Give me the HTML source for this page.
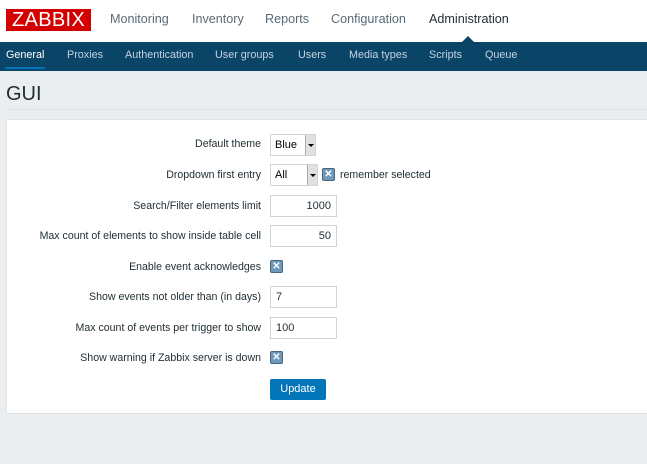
<!DOCTYPE html>
<html><head><style>
*{box-sizing:border-box;margin:0;padding:0}
body{width:647px;height:464px;background:#ebeef0;font-family:"Liberation Sans",sans-serif;position:relative;overflow:hidden}
.hdr{position:absolute;left:0;top:0;width:647px;height:42px;background:#fff}
.logo{position:absolute;left:6px;top:9px;width:85px;height:22px;background:#d40000;color:#fff;font-size:20px;letter-spacing:0.3px;line-height:22px;text-align:center}
.top{position:absolute;top:12px;font-size:12.6px;color:#5a6a76}
.nav{position:absolute;left:0;top:42px;width:647px;height:29px;background:#0a4466}
.sub{position:absolute;top:49px;font-size:10.8px;color:#c4d3df}
.arrow{position:absolute;left:462px;top:36px;width:0;height:0;border-left:6px solid transparent;border-right:6px solid transparent;border-bottom:6px solid #0a4466}
.title{position:absolute;left:6px;top:83px;font-size:20px;color:#1f2c33}
.rule{position:absolute;left:6px;top:109px;width:641px;height:1px;background:#dde1e4}
.box{position:absolute;left:6px;top:119px;width:645px;height:295px;background:#fff;border:1px solid #dfe4e7}
.lbl{position:absolute;right:386px;font-size:10.6px;color:#1f2c33;text-align:right;white-space:nowrap}
.inp{position:absolute;left:270px;width:67px;height:22px;border:1px solid #ccd5d9;font-size:11px;color:#1f2c33;line-height:20px;padding:0 5px}
.sel{position:absolute;left:270px;height:22px;border:1px solid #ccd5d9;font-size:11px;line-height:20px;padding-left:4px;color:#000}
.sel i{position:absolute;right:0;top:0;width:10px;height:20px;background:#e0e0e0;border-left:1px solid #aaa}
.sel i:after{content:"";position:absolute;left:2px;top:9px;border-left:3px solid transparent;border-right:3px solid transparent;border-top:3px solid #000}
.cb{position:absolute;width:13px;height:13px;background:#6e99bb;border:1px solid #4b6578;border-radius:2px;color:#fff;font-size:10px;font-weight:bold;line-height:11px;text-align:center}
.btn{position:absolute;left:270px;top:379px;width:56px;height:21px;background:#0275b8;border-radius:2px;color:#fff;font-size:11px;text-align:center;line-height:21px}
</style></head><body>
<div class="hdr"></div>
<div class="logo">ZABBIX</div>
<div class="top" style="left:110px">Monitoring</div>
<div class="top" style="left:192px">Inventory</div>
<div class="top" style="left:265px">Reports</div>
<div class="top" style="left:331px">Configuration</div>
<div class="top" style="left:429px;color:#1f2c33">Administration</div>
<div class="nav"></div><div class="arrow"></div>
<div class="sub" style="left:6px;color:#fff">General</div>
<div style="position:absolute;left:5px;top:67px;width:40px;height:2px;background:#0275b8"></div>
<div class="sub" style="left:67px">Proxies</div>
<div class="sub" style="left:125px">Authentication</div>
<div class="sub" style="left:215px">User groups</div>
<div class="sub" style="left:298px">Users</div>
<div class="sub" style="left:349px">Media types</div>
<div class="sub" style="left:429px">Scripts</div>
<div class="sub" style="left:485px">Queue</div>
<div class="title">GUI</div>
<div class="rule"></div>
<div class="box"></div>
<div class="lbl" style="top:138px">Default theme</div>
<div class="sel" style="top:134px;width:46px">Blue<i></i></div>
<div class="lbl" style="top:169px">Dropdown first entry</div>
<div class="sel" style="top:164px;width:48px">All<i></i></div>
<div class="cb" style="left:322px;top:168px">✕</div>
<div style="position:absolute;left:340px;top:169px;font-size:10.6px;color:#1f2c33">remember selected</div>
<div class="lbl" style="top:200px">Search/Filter elements limit</div>
<div class="inp" style="top:195px;text-align:right">1000</div>
<div class="lbl" style="top:230px">Max count of elements to show inside table cell</div>
<div class="inp" style="top:225px;text-align:right">50</div>
<div class="lbl" style="top:261px">Enable event acknowledges</div>
<div class="cb" style="left:270px;top:260px">✕</div>
<div class="lbl" style="top:291px">Show events not older than (in days)</div>
<div class="inp" style="top:286px">7</div>
<div class="lbl" style="top:322px">Max count of events per trigger to show</div>
<div class="inp" style="top:317px">100</div>
<div class="lbl" style="top:352px">Show warning if Zabbix server is down</div>
<div class="cb" style="left:270px;top:351px">✕</div>
<div class="btn">Update</div>
</body></html>
